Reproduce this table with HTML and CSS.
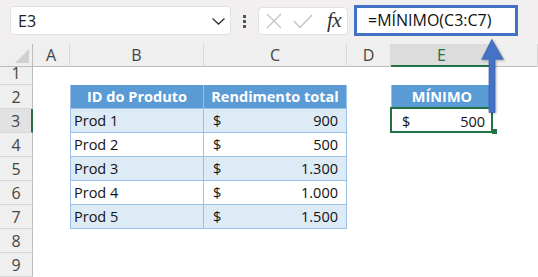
FILE: index.html
```html
<!DOCTYPE html>
<html lang="pt-BR">
<head>
<meta charset="utf-8">
<title>MÍNIMO</title>
<link rel="stylesheet" href="styles.css">
</head>
<body>
<div class="toolbar">
  <div class="namebox">
    <span>E3</span>
    <svg class="chev" width="13" height="7" viewBox="0 0 13 7"><polyline points="0.5,0.5 6.5,6 12.5,0.5" fill="none" stroke="#333" stroke-width="1.3"/></svg>
  </div>
  <div class="grip"><i></i><i></i><i></i></div>
  <div class="fxbox">
    <svg class="ico-x" width="16" height="16" viewBox="0 0 16 16"><path d="M1 1L15 15M15 1L1 15" stroke="#c4c4c4" stroke-width="1.4" fill="none"/></svg>
    <svg class="ico-ok" width="20" height="15" viewBox="0 0 20 15"><polyline points="1,7 7,13.5 19,1" stroke="#c4c4c4" stroke-width="1.4" fill="none"/></svg>
    <span class="fx">fx</span>
  </div>
  <div class="formula">=MÍNIMO(C3:C7)</div>
</div>

<div class="sheet">
  <!-- column headers -->
  <div class="corner"><svg width="16" height="16" viewBox="0 0 16 16"><polygon points="15,1 15,15 1,15" fill="#d0d0d0"/></svg></div>
  <div class="ch">A</div><div class="ch">B</div><div class="ch">C</div><div class="ch">D</div><div class="ch ch-on">E</div><div class="ch"></div>

  <!-- row 1 -->
  <div class="rh rh-cut">1</div><div></div><div></div><div></div><div></div><div></div><div></div>

  <!-- row 2 -->
  <div class="rh">2</div><div></div>
  <div class="cell th th-first">ID do Produto</div>
  <div class="cell th">Rendimento total</div>
  <div></div>
  <div class="cell th th-first th-solo">MÍNIMO</div>
  <div></div>

  <!-- row 3 -->
  <div class="rh rh-on">3</div><div></div>
  <div class="cell td td-first band">Prod 1</div>
  <div class="cell td acc band"><span>$</span><span>900</span></div>
  <div></div>
  <div class="cell acc sel"><span>$</span><span>500</span></div>
  <div></div>

  <!-- row 4 -->
  <div class="rh">4</div><div></div>
  <div class="cell td td-first">Prod 2</div>
  <div class="cell td acc"><span>$</span><span>500</span></div>
  <div></div><div></div><div></div>

  <!-- row 5 -->
  <div class="rh">5</div><div></div>
  <div class="cell td td-first band">Prod 3</div>
  <div class="cell td acc band"><span>$</span><span>1.300</span></div>
  <div></div><div></div><div></div>

  <!-- row 6 -->
  <div class="rh">6</div><div></div>
  <div class="cell td td-first">Prod 4</div>
  <div class="cell td acc"><span>$</span><span>1.000</span></div>
  <div></div><div></div><div></div>

  <!-- row 7 -->
  <div class="rh">7</div><div></div>
  <div class="cell td td-first band">Prod 5</div>
  <div class="cell td acc band"><span>$</span><span>1.500</span></div>
  <div></div><div></div><div></div>

  <!-- rows 8-9 -->
  <div class="rh">8</div><div></div><div></div><div></div><div></div><div></div><div></div>
  <div class="rh">9</div><div></div><div></div><div></div><div></div><div></div><div></div>
</div>

<!-- callout arrow from the result cell to the formula -->
<svg class="arrow" width="32" height="84" viewBox="0 0 32 84">
  <path d="M13.8 3.3 L25.3 23.3 L17 23.3 L17 76.5 L11 76.5 L11 23.3 L3.7 23.3 Z" fill="#4472c4" stroke="#3560b0" stroke-width="0.6"/>
</svg>
</body>
</html>
```

FILE: styles.css
```css
* {
  box-sizing: border-box;
}

html,
body {
  margin: 0;
  padding: 0;
  background: #fff;
  overflow: hidden;
}

body {
  position: relative;
  width: 538px;
  height: 277px;
  font-family: "Open Sans", "Noto Sans", sans-serif;
  color: #111;
}

/* ---------- formula toolbar ---------- */
.toolbar {
  height: 44px;
  background: #f1efef;
  display: flex;
  align-items: flex-start;
}

.namebox {
  margin: 6px 0 0 10px;
  width: 221px;
  height: 29px;
  background: #fff;
  border: 1px solid #e2e0e0;
  border-radius: 4px;
  display: flex;
  align-items: center;
  justify-content: space-between;
  padding: 0 5px 0 7px;
  font-size: 16px;
  color: #222;
}

.namebox .chev {
  margin-top: 1px;
}

.grip {
  width: 27px;
  margin-top: 15px;
  display: flex;
  flex-direction: column;
  align-items: center;
  gap: 2px;
}

.grip i {
  display: block;
  width: 3px;
  height: 3px;
  background: #555;
}

.fxbox {
  margin-top: 7px;
  width: 90px;
  height: 28px;
  background: #fff;
  border: 1px solid #e2e0e0;
  border-radius: 4px;
  display: flex;
  align-items: center;
  padding-left: 7px;
}

.ico-ok {
  margin-left: 11px;
}

.fx {
  margin-left: 14px;
  font-family: "Liberation Serif", "DejaVu Serif", serif;
  font-style: italic;
  font-size: 21px;
  line-height: 1;
  color: #333;
  margin-top: -2px;
  letter-spacing: -0.5px;
}

.formula {
  margin: 5px 0 0 6px;
  width: 164px;
  height: 31px;
  background: #fff;
  border: 3px solid #4472c4;
  padding-left: 11px;
  font-size: 16px;
  line-height: 24px;
  color: #111;
  white-space: nowrap;
}

/* ---------- worksheet grid ---------- */
.sheet {
  display: grid;
  grid-template-columns: 33px 37px 134px 143px 44px 102px 45px;
  grid-template-rows: 23px 18px repeat(8, 24px);
}

.corner {
  background: #efefef;
  border-right: 1px solid #bcbcbc;
  border-bottom: 1px solid #bcbcbc;
  display: flex;
  align-items: flex-end;
  justify-content: flex-end;
  padding: 0 2px 2px 0;
}

.corner svg {
  display: block;
}

.ch {
  background: #efefef;
  border-right: 1px solid #d8d8d8;
  border-bottom: 1px solid #bcbcbc;
  display: flex;
  align-items: center;
  justify-content: center;
  font-size: 16px;
  color: #444;
}

.ch-on {
  background: #dcdcdc;
  color: #217346;
  border-bottom: 2px solid #217346;
}

.rh {
  background: #efefef;
  border-right: 1px solid #bcbcbc;
  border-bottom: 1px solid #d8d8d8;
  display: flex;
  align-items: center;
  justify-content: center;
  font-size: 16px;
  color: #444;
}

.rh-cut {
  padding-bottom: 5px;
}

.rh-on {
  background: #e2e2e2;
  border-right: 2px solid #217346;
}

/* ---------- cells ---------- */
.cell {
  display: flex;
  align-items: center;
  font-size: 14.5px;
  white-space: nowrap;
}

.th {
  background: #5b9bd5;
  color: #fff;
  font-weight: 700;
  justify-content: center;
  border-right: 1px solid #9bc2e6;
  border-bottom: 1px solid #9bc2e6;
}

.th-first {
  border-left: 1px solid #9bc2e6;
}

.td {
  border-right: 1px solid #9bc2e6;
  border-bottom: 1px solid #9bc2e6;
}

.td-first {
  border-left: 1px solid #9bc2e6;
  padding-left: 3px;
}

.band {
  background: #ddebf7;
}

.acc {
  justify-content: space-between;
  padding: 0 8px 0 9px;
}

.sel {
  position: relative;
  padding: 0 8px 0 11px;
}

.sel::after {
  content: "";
  position: absolute;
  left: -1px;
  top: -2px;
  right: 0;
  bottom: 0;
  border: 2px solid #217346;
}

.sel::before {
  content: "";
  position: absolute;
  right: -4px;
  bottom: -1px;
  width: 5px;
  height: 5px;
  background: #217346;
  z-index: 1;
}

/* ---------- callout ---------- */
.arrow {
  position: absolute;
  left: 478px;
  top: 36px;
  filter: drop-shadow(1.5px 1px 1px rgba(0, 0, 0, 0.3));
}
```
